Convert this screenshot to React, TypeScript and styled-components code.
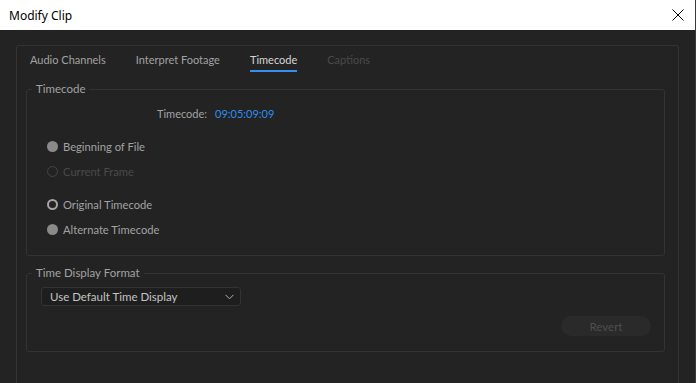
import React from "react";
import styled, { createGlobalStyle } from "styled-components";

const Global = createGlobalStyle`
  html, body { margin: 0; padding: 0; background: #232323; }
  body { font-family: Lato, "Noto Sans", sans-serif; overflow: hidden; }
  * { box-sizing: border-box; }
`;

const Window = styled.div`
  width: 696px;
  height: 383px;
  display: flex;
  flex-direction: column;
  background: #232323;
  border-right: 1px solid #3a3a3a;
  overflow: hidden;
`;

const TitleBar = styled.div`
  height: 30px;
  flex: none;
  background: #ffffff;
  display: flex;
  align-items: center;
  justify-content: space-between;
  padding: 0 10px 0 9px;
  color: #000;
  font-family: "Noto Sans", sans-serif;
  font-size: 12px;
`;

const CloseBtn = styled.div`
  width: 14px;
  height: 14px;
  display: flex;
  align-items: center;
  justify-content: center;
`;

const Body = styled.div`
  flex: 1;
  padding: 15px 16px 0 16px;
  display: flex;
`;

const Panel = styled.div`
  flex: 1;
  border: 1px solid #333333;
  border-bottom: none;
  border-radius: 3px 3px 0 0;
  padding: 0 13px 0 9px;
  display: flex;
  flex-direction: column;
`;

const Tabs = styled.div`
  display: flex;
  gap: 30px;
  padding-left: 4px;
  height: 26px;
  align-items: flex-end;
`;

const Tab = styled.div<{ $active?: boolean; $disabled?: boolean }>`
  font-size: 11px;
  line-height: 16px;
  padding-bottom: 2px;
  color: ${(p) => (p.$disabled ? "#4a4a4a" : p.$active ? "#d6d6d6" : "#a2a2a2")};
  border-bottom: 2px solid ${(p) => (p.$active ? "#378ef0" : "transparent")};
`;

const Group = styled.fieldset<{ $height: number }>`
  margin: 0;
  padding: 0;
  border: 1px solid #333333;
  border-radius: 3px;
  height: ${(p) => p.$height}px;
  display: flex;
  flex-direction: column;
  min-width: 0;
`;

const Legend = styled.legend`
  margin-left: 5px;
  padding: 0 4px;
  font-size: 11.5px;
  color: #a2a2a2;
  line-height: 14px;
`;

const GroupGap = styled.div<{ $h: number }>`
  height: ${(p) => p.$h}px;
  flex: none;
`;

const TimecodeRow = styled.div`
  display: flex;
  gap: 8px;
  padding-left: 130px;
  margin-top: 10px;
  font-size: 11px;
  line-height: 16px;
`;

const Label = styled.span`
  color: #a2a2a2;
`;

const Value = styled.span`
  color: #2f8ef0;
`;

const RadioList = styled.div`
  display: flex;
  flex-direction: column;
  padding-left: 20px;
  margin-top: 16px;
`;

const RadioRow = styled.div<{ $gapTop?: number }>`
  display: flex;
  align-items: center;
  gap: 5px;
  height: 16px;
  margin-top: ${(p) => p.$gapTop ?? 0}px;
  font-size: 11.2px;
`;

const Dot = styled.span<{ $kind: "filled" | "ring" | "disabled" }>`
  width: 11px;
  height: 11px;
  border-radius: 50%;
  flex: none;
  background: ${(p) => (p.$kind === "filled" ? "#8a8a8a" : "transparent")};
  border: ${(p) =>
    p.$kind === "filled"
      ? "none"
      : p.$kind === "ring"
      ? "2px solid #a5a5a5"
      : "1.5px solid #444444"};
`;

const RadioText = styled.span<{ $disabled?: boolean }>`
  color: ${(p) => (p.$disabled ? "#4a4a4a" : "#a2a2a2")};
`;

const Select = styled.div`
  margin: 7px 0 0 14px;
  width: 200px;
  height: 19px;
  border: 1px solid #333333;
  border-radius: 3px;
  background: #1e1e1e;
  display: flex;
  align-items: center;
  justify-content: space-between;
  padding: 0 6px 0 8px;
  font-size: 11.5px;
  color: #c4c4c4;
`;

const ButtonRow = styled.div`
  display: flex;
  justify-content: flex-end;
  padding-right: 13px;
  margin-top: 10px;
`;

const Revert = styled.div`
  width: 90px;
  height: 20px;
  border-radius: 10px;
  background: #2a2a2a;
  color: #4e4e4e;
  font-size: 11.5px;
  display: flex;
  align-items: center;
  justify-content: center;
`;

export default function App() {
  return (
    <>
      <Global />
      <Window>
        <TitleBar>
          <span>Modify Clip</span>
          <CloseBtn>
            <svg width="12" height="12" viewBox="0 0 12 12">
              <path d="M0.5 0.5 L11.5 11.5 M11.5 0.5 L0.5 11.5" stroke="#000" strokeWidth="1" />
            </svg>
          </CloseBtn>
        </TitleBar>
        <Body>
          <Panel>
            <Tabs>
              <Tab>Audio Channels</Tab>
              <Tab>Interpret Footage</Tab>
              <Tab $active>Timecode</Tab>
              <Tab $disabled>Captions</Tab>
            </Tabs>
            <GroupGap $h={10} />
            <Group $height={174}>
              <Legend>Timecode</Legend>
              <TimecodeRow>
                <Label>Timecode:</Label>
                <Value>09:05:09:09</Value>
              </TimecodeRow>
              <RadioList>
                <RadioRow>
                  <Dot $kind="filled" />
                  <RadioText>Beginning of File</RadioText>
                </RadioRow>
                <RadioRow $gapTop={9}>
                  <Dot $kind="disabled" />
                  <RadioText $disabled>Current Frame</RadioText>
                </RadioRow>
                <RadioRow $gapTop={17}>
                  <Dot $kind="ring" />
                  <RadioText>Original Timecode</RadioText>
                </RadioRow>
                <RadioRow $gapTop={9}>
                  <Dot $kind="filled" />
                  <RadioText>Alternate Timecode</RadioText>
                </RadioRow>
              </RadioList>
            </Group>
            <GroupGap $h={10} />
            <Group $height={86}>
              <Legend>Time Display Format</Legend>
              <Select>
                <span>Use Default Time Display</span>
                <svg width="9" height="6" viewBox="0 0 9 6">
                  <path d="M0.5 0.8 L4.5 4.8 L8.5 0.8" stroke="#b0b0b0" strokeWidth="1" fill="none" />
                </svg>
              </Select>
              <ButtonRow>
                <Revert>Revert</Revert>
              </ButtonRow>
            </Group>
          </Panel>
        </Body>
      </Window>
    </>
  );
}
